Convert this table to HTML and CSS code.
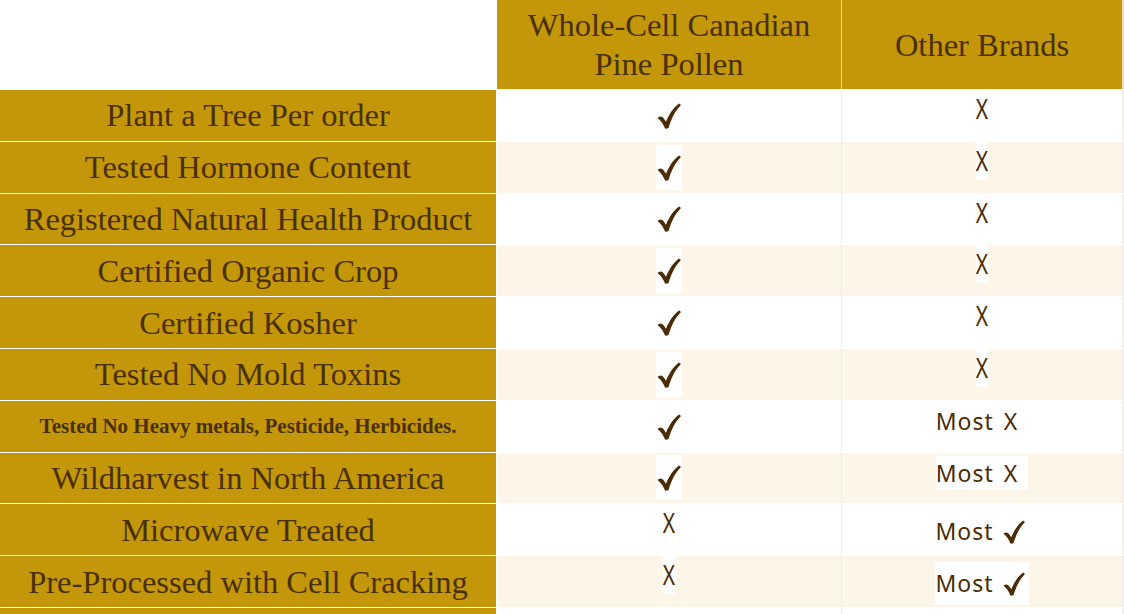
FILE: index.html
```html
<!DOCTYPE html>
<html>
<head>
<meta charset="utf-8">
<link rel="stylesheet" href="styles.css">
</head>
<body>
<div class="table">
  <div class="cell blank"></div>
  <div class="cell head">Whole-Cell Canadian<br>Pine Pollen</div>
  <div class="cell head other">Other Brands</div>

  <div class="cell label">Plant a Tree Per order</div>
  <div class="cell val"><span class="mark chk"><svg viewBox="0 0 24 26" width="24" height="26"><path d="M0.5 15C2.5 12.8 5.2 13 7 15.8L9 18.8C12 11.5 16 4.8 22 0.5L24 2C18.5 7.5 14.5 15 11.5 25.3L8.2 25.8C6.5 21.5 4 17.5 0.5 15Z"/></svg></span></div>
  <div class="cell val other"><span class="mark x">X</span></div>

  <div class="cell label">Tested Hormone Content</div>
  <div class="cell val alt"><span class="mark chk"><svg viewBox="0 0 24 26" width="24" height="26"><path d="M0.5 15C2.5 12.8 5.2 13 7 15.8L9 18.8C12 11.5 16 4.8 22 0.5L24 2C18.5 7.5 14.5 15 11.5 25.3L8.2 25.8C6.5 21.5 4 17.5 0.5 15Z"/></svg></span></div>
  <div class="cell val alt other"><span class="mark x">X</span></div>

  <div class="cell label">Registered Natural Health Product</div>
  <div class="cell val"><span class="mark chk"><svg viewBox="0 0 24 26" width="24" height="26"><path d="M0.5 15C2.5 12.8 5.2 13 7 15.8L9 18.8C12 11.5 16 4.8 22 0.5L24 2C18.5 7.5 14.5 15 11.5 25.3L8.2 25.8C6.5 21.5 4 17.5 0.5 15Z"/></svg></span></div>
  <div class="cell val other"><span class="mark x">X</span></div>

  <div class="cell label">Certified Organic Crop</div>
  <div class="cell val alt"><span class="mark chk"><svg viewBox="0 0 24 26" width="24" height="26"><path d="M0.5 15C2.5 12.8 5.2 13 7 15.8L9 18.8C12 11.5 16 4.8 22 0.5L24 2C18.5 7.5 14.5 15 11.5 25.3L8.2 25.8C6.5 21.5 4 17.5 0.5 15Z"/></svg></span></div>
  <div class="cell val alt other"><span class="mark x">X</span></div>

  <div class="cell label">Certified Kosher</div>
  <div class="cell val"><span class="mark chk"><svg viewBox="0 0 24 26" width="24" height="26"><path d="M0.5 15C2.5 12.8 5.2 13 7 15.8L9 18.8C12 11.5 16 4.8 22 0.5L24 2C18.5 7.5 14.5 15 11.5 25.3L8.2 25.8C6.5 21.5 4 17.5 0.5 15Z"/></svg></span></div>
  <div class="cell val other"><span class="mark x">X</span></div>

  <div class="cell label">Tested No Mold Toxins</div>
  <div class="cell val alt"><span class="mark chk"><svg viewBox="0 0 24 26" width="24" height="26"><path d="M0.5 15C2.5 12.8 5.2 13 7 15.8L9 18.8C12 11.5 16 4.8 22 0.5L24 2C18.5 7.5 14.5 15 11.5 25.3L8.2 25.8C6.5 21.5 4 17.5 0.5 15Z"/></svg></span></div>
  <div class="cell val alt other"><span class="mark x">X</span></div>

  <div class="cell label small">Tested No Heavy metals, Pesticide, Herbicides.</div>
  <div class="cell val"><span class="mark chk"><svg viewBox="0 0 24 26" width="24" height="26"><path d="M0.5 15C2.5 12.8 5.2 13 7 15.8L9 18.8C12 11.5 16 4.8 22 0.5L24 2C18.5 7.5 14.5 15 11.5 25.3L8.2 25.8C6.5 21.5 4 17.5 0.5 15Z"/></svg></span></div>
  <div class="cell val other"><span class="mark most">Most X</span></div>

  <div class="cell label">Wildharvest in North America</div>
  <div class="cell val alt"><span class="mark chk"><svg viewBox="0 0 24 26" width="24" height="26"><path d="M0.5 15C2.5 12.8 5.2 13 7 15.8L9 18.8C12 11.5 16 4.8 22 0.5L24 2C18.5 7.5 14.5 15 11.5 25.3L8.2 25.8C6.5 21.5 4 17.5 0.5 15Z"/></svg></span></div>
  <div class="cell val alt other"><span class="mark most">Most X</span></div>

  <div class="cell label">Microwave Treated</div>
  <div class="cell val"><span class="mark x">X</span></div>
  <div class="cell val other"><span class="mark most chkmost">Most <svg viewBox="0 0 24 26" width="22" height="24"><path d="M0.5 15C2.5 12.8 5.2 13 7 15.8L9 18.8C12 11.5 16 4.8 22 0.5L24 2C18.5 7.5 14.5 15 11.5 25.3L8.2 25.8C6.5 21.5 4 17.5 0.5 15Z"/></svg></span></div>

  <div class="cell label">Pre-Processed with Cell Cracking</div>
  <div class="cell val alt"><span class="mark x">X</span></div>
  <div class="cell val alt other"><span class="mark most chkmost">Most <svg viewBox="0 0 24 26" width="22" height="24"><path d="M0.5 15C2.5 12.8 5.2 13 7 15.8L9 18.8C12 11.5 16 4.8 22 0.5L24 2C18.5 7.5 14.5 15 11.5 25.3L8.2 25.8C6.5 21.5 4 17.5 0.5 15Z"/></svg></span></div>

  <div class="cell label"></div>
  <div class="cell val"></div>
  <div class="cell val other"></div>
</div>
</body>
</html>
```

FILE: styles.css
```css
html, body {
  margin: 0;
  padding: 0;
  height: 614px;
  overflow: hidden;
  background: #ffffff;
}

.table {
  display: grid;
  grid-template-columns: 497px 344px 283px;
  grid-template-rows: 89px;
  grid-auto-rows: 50.8px;
  row-gap: 1px;
  background: #ffffff;
  width: 1124px;
}

.cell {
  box-sizing: border-box;
  display: flex;
  align-items: center;
  justify-content: center;
  text-align: center;
}

.blank {
  background: #ffffff;
  border-right: 1px solid #ffffff;
}

.head {
  background: #c49609;
  color: #4a3008;
  font-family: "Liberation Serif", "Times New Roman", serif;
  font-size: 32.5px;
  line-height: 39px;
  padding-top: 1px;
}

.head.other {
  border-left: 1px solid #ecdcae;
  border-right: 2px solid #e9dcc0;
}

.label {
  background: #c49609;
  border-right: 1px solid #ffffff;
  color: #4a3008;
  font-family: "Liberation Serif", "Times New Roman", serif;
  font-size: 32.5px;
  line-height: 36px;
  white-space: nowrap;
}

.label.small {
  font-size: 21px;
  font-weight: bold;
}

.val {
  background: #ffffff;
}

.val.alt {
  background: #fdf5e8;
}

.val.other {
  border-left: 1px solid #f0ebe4;
  border-right: 2px solid #f3efe9;
}

.mark {
  background: #ffffff;
  color: #4a2c06;
  display: inline-flex;
  align-items: center;
}

.mark svg {
  fill: #4a2c06;
  display: block;
}

.chk {
  padding: 10px 1px 9px 1px;
}

.x {
  font-family: "Noto Sans", "DejaVu Sans", sans-serif;
  font-size: 27px;
  line-height: 39px;
  margin-bottom: 14px;
  transform: scaleX(0.78);
}

.most {
  font-family: "Noto Sans", "DejaVu Sans", sans-serif;
  font-size: 23px;
  line-height: 34px;
  letter-spacing: 1px;
  word-spacing: 3px;
  padding-right: 10px;
  margin-bottom: 10px;
}

.chkmost {
  line-height: 43px;
  margin-bottom: 0;
  margin-top: 4px;
  gap: 9px;
  padding-right: 4px;
}
```
